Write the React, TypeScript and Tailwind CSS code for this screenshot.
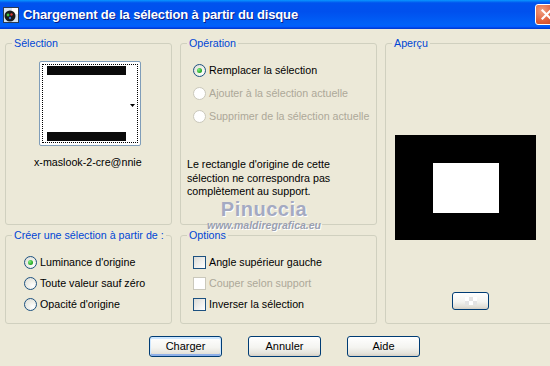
import React from "react";

const Radio = ({ checked = false, disabled = false }: { checked?: boolean; disabled?: boolean }) => (
  <span
    className={
      "flex items-center justify-center w-[13px] h-[13px] rounded-full border shrink-0 " +
      (disabled
        ? "border-[#CAC8BB] bg-white"
        : "border-[#1C5180] bg-[radial-gradient(circle_at_70%_70%,#ffffff,#f0f0ea_40%,#dcdcd4)]")
    }
  >
    {checked && (
      <span className="w-[5px] h-[5px] rounded-full bg-[radial-gradient(circle_at_35%_35%,#7ff07f,#21a121_70%)]" />
    )}
  </span>
);

const Check = ({ disabled = false }: { disabled?: boolean }) => (
  <span
    className={
      "w-[13px] h-[13px] border shrink-0 " +
      (disabled
        ? "border-[#CAC8BB] bg-white"
        : "border-[#1C5180] bg-[linear-gradient(135deg,#dcdcd7,#ffffff)]")
    }
  />
);

const XpButton = ({ label, def = false }: { label: string; def?: boolean }) => (
  <div
    className={
      "flex items-center justify-center w-[73px] h-[21px] rounded-[3px] border border-[#003C74] bg-[linear-gradient(to_bottom,#ffffff,#f4f4f0_55%,#e6e4dc_85%,#d6d0c5)] text-black " +
      (def ? "shadow-[inset_0_1px_0_1px_#cee7ff,inset_0_-1px_0_1px_#8fb0e8]" : "")
    }
  >
    {label}
  </div>
);

const Group = ({
  title,
  className,
  children,
}: {
  title: string;
  className?: string;
  children?: React.ReactNode;
}) => (
  <fieldset className={"border border-[#D0D0BF] rounded-[3px] min-w-0 " + (className ?? "")}>
    <legend className="ml-[6px] px-[2px] leading-[13px] text-[#0046D5]">{title}</legend>
    {children}
  </fieldset>
);

export default function App() {
  return (
    <div className="relative w-[550px] h-[366px] overflow-hidden bg-[#ECE9D8] font-['Liberation_Sans',Arial,sans-serif] text-[10.7px] text-black">
      <div className="w-[562px]">
        {/* title bar */}
        <div className="flex items-center h-[29px] bg-[linear-gradient(to_bottom,#0997ff,#0053ee_10%,#0050ee_40%,#0062f8_85%,#005bff_92%,#003dd7_97%,#003dd7)]">
          <svg className="ml-[3px] shrink-0" width="16" height="16" viewBox="0 0 16 16">
            <rect x="0.5" y="0.5" width="15" height="15" fill="#d8e4f0" stroke="#2a3a52" />
            <rect x="9" y="1" width="6" height="6" fill="#ffffff" />
            <circle cx="7" cy="9" r="5.5" fill="#1a1a1a" />
            <circle cx="5" cy="8" r="1.4" fill="#3fbf3f" />
            <circle cx="8.5" cy="7.5" r="1.2" fill="#d83a3a" />
            <circle cx="7" cy="11" r="1.2" fill="#3a6ad8" />
          </svg>
          <span className="ml-[4px] text-[13px] font-bold tracking-[-0.15px] text-white [text-shadow:1px_1px_0_#0a1e8a]">
            Chargement de la sélection à partir du disque
          </span>
          <div className="ml-auto mr-[5px] flex items-center justify-center w-[22px] h-[21px] rounded-[3px] border border-white bg-[radial-gradient(circle_at_30%_30%,#f0a080,#e0603c_55%,#c2401e)]">
            <svg width="11" height="11" viewBox="0 0 11 11">
              <path d="M1.5 1.5 L9.5 9.5 M9.5 1.5 L1.5 9.5" stroke="white" strokeWidth="2.2" strokeLinecap="square" />
            </svg>
          </div>
        </div>

        {/* body */}
        <div className="grid grid-cols-[167px_197px_172px] grid-rows-[188px_95px] gap-x-[8px] gap-y-[4px] pl-[5px] pt-[8px]">
          <Group title="Sélection">
            <div className="flex flex-col">
              <div className="ml-[33px] mt-[11px] w-[102px] h-[85px] rounded-[2px] border border-[#7F9DB9] bg-white p-[2px]">
                <div className="relative h-full border border-dotted border-black flex flex-col justify-between px-[4px] py-[1px]">
                  <div className="w-[79px] h-[9px] bg-[#0a0a0a]" />
                  <div className="w-[79px] h-[9px] bg-[#0a0a0a]" />
                  <svg className="absolute right-[2px] top-[39px]" width="5" height="3" viewBox="0 0 5 3">
                    <path d="M0 0 H5 L2.5 3 Z" fill="black" />
                  </svg>
                </div>
              </div>
              <div className="ml-[28px] mt-[10px] leading-[13px]">x-maslook-2-cre@nnie</div>
            </div>
          </Group>

          <Group title="Opération">
            <div className="flex flex-col pl-[12px] mt-[9px]">
              <div className="flex items-center gap-[3px] h-[23px]">
                <Radio checked />
                <span>Remplacer la sélection</span>
              </div>
              <div className="flex items-center gap-[3px] h-[23px] text-[#ACA899]">
                <Radio disabled />
                <span>Ajouter à la sélection actuelle</span>
              </div>
              <div className="flex items-center gap-[3px] h-[23px] text-[#ACA899]">
                <Radio disabled />
                <span>Supprimer de la sélection actuelle</span>
              </div>
            </div>
            <p className="ml-[6px] mt-[30px] leading-[13.5px]">
              Le rectangle d'origine de cette
              <br />
              sélection ne correspondra pas
              <br />
              complètement au support.
            </p>
          </Group>

          <Group title="Aperçu" className="row-span-2">
            <div className="flex flex-col">
              <div className="ml-[9px] mt-[85px] w-[141px] h-[105px] bg-black flex items-center justify-center">
                <div className="w-[66px] h-[50px] bg-white" />
              </div>
              <div className="ml-[66px] mt-[52px] flex items-center justify-center w-[37px] h-[18px] rounded-[3px] border border-[#003C74] bg-[linear-gradient(to_bottom,#ffffff,#f4f4f0_55%,#e2e0d8_85%,#d6d0c5)]">
                <svg width="12" height="8" viewBox="0 0 12 8">
                  <rect x="0" y="0" width="4" height="4" fill="#ffffff" />
                  <rect x="4" y="0" width="4" height="4" fill="#e4e4e4" />
                  <rect x="8" y="0" width="4" height="4" fill="#ffffff" />
                  <rect x="0" y="4" width="4" height="4" fill="#e4e4e4" />
                  <rect x="4" y="4" width="4" height="4" fill="#ffffff" />
                  <rect x="8" y="4" width="4" height="4" fill="#e4e4e4" />
                </svg>
              </div>
            </div>
          </Group>

          <Group title="Créer une sélection à partir de :">
            <div className="flex flex-col pl-[18px] mt-[10px]">
              <div className="flex items-center gap-[3px] h-[21px]">
                <Radio checked />
                <span>Luminance d'origine</span>
              </div>
              <div className="flex items-center gap-[3px] h-[21px]">
                <Radio />
                <span>Toute valeur sauf zéro</span>
              </div>
              <div className="flex items-center gap-[3px] h-[21px]">
                <Radio />
                <span>Opacité d'origine</span>
              </div>
            </div>
          </Group>

          <Group title="Options">
            <div className="flex flex-col pl-[12px] mt-[10px]">
              <div className="flex items-center gap-[3px] h-[21px]">
                <Check />
                <span>Angle supérieur gauche</span>
              </div>
              <div className="flex items-center gap-[3px] h-[21px] text-[#ACA899]">
                <Check disabled />
                <span>Couper selon support</span>
              </div>
              <div className="flex items-center gap-[3px] h-[21px]">
                <Check />
                <span>Inverser la sélection</span>
              </div>
            </div>
          </Group>
        </div>

        {/* buttons */}
        <div className="flex gap-[26px] pl-[149px] mt-[12px] text-[11px]">
          <XpButton label="Charger" def />
          <XpButton label="Annuler" />
          <XpButton label="Aide" />
        </div>
      </div>

      {/* watermark */}
      <div className="absolute left-[203px] top-[198px] w-[122px] flex flex-col items-center pointer-events-none">
        <span className="text-[20px] leading-[22px] font-semibold tracking-[0.5px] text-[#A4AAC2] [text-shadow:1px_1px_0_#ffffff]">
          Pinuccia
        </span>
        <span className="text-[10.5px] leading-[11px] italic font-bold text-[#9aa0b0] [text-shadow:1px_1px_0_#ffffff]">
          www.maldiregrafica.eu
        </span>
      </div>
    </div>
  );
}
